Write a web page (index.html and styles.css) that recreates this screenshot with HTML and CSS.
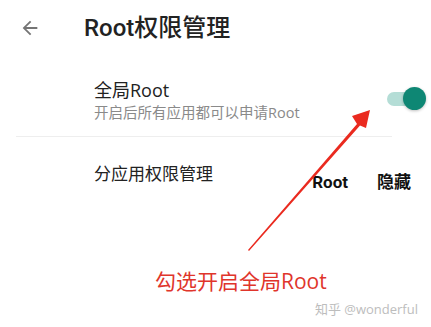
FILE: index.html
```
<!DOCTYPE html>
<html lang="zh">
<head>
<meta charset="utf-8">
<link rel="stylesheet" href="styles.css">
</head>
<body>
<div class="page">
  <header class="bar">
    <svg class="back" width="22" height="22" viewBox="0 0 24 24"><path d="M20 11H7.83l5.59-5.59L12 4l-8 8 8 8 1.41-1.41L7.83 13H20v-2z" fill="#757575"/></svg>
    <h1 class="title">Root权限管理</h1>
  </header>
  <section class="item item-global">
    <div class="texts">
      <div class="item-title">全局Root</div>
      <div class="item-sub">开启后所有应用都可以申请Root</div>
    </div>
    <div class="switch"><span class="track"></span><span class="thumb"></span></div>
  </section>
  <div class="divider"></div>
  <section class="item item-apps">
    <div class="item-title">分应用权限管理</div>
    <div class="tabs"><span class="tab">Root</span><span class="tab">隐藏</span></div>
  </section>
  <p class="caption">勾选开启全局Root</p>
  <p class="mark">知乎 @wonderful</p>
  <svg class="arrow" width="431" height="327" viewBox="0 0 431 327">
    <polygon points="248,250 357,124 352,116 370,110 366,128 360,125.5 249,251" fill="#ea2a1f"/>
  </svg>
</div>
</body>
</html>
```
FILE: styles.css
```
html, body { margin: 0; padding: 0; background: #fff; }
body { font-family: "Open Sans", "Noto Sans CJK SC", sans-serif; }
.page { position: relative; width: 431px; height: 327px; overflow: hidden; }
.bar { display: flex; align-items: center; height: 56px; padding-left: 19px; }
.back { display: block; }
.title { margin: 0 0 0 43px; font-family: Roboto, "Noto Sans CJK SC", sans-serif; font-size: 24px; font-weight: 500; color: #222; line-height: 56px; }
.item { display: flex; padding-left: 94px; }
.item-global { padding-top: 23px; padding-bottom: 14px; align-items: flex-start; }
.texts { flex: 1; }
.item-title { font-size: 18px; line-height: 22px; color: #222; }
.item-sub { margin-top: 3px; font-size: 14.5px; line-height: 18px; color: #8a8a8a; }
.switch { position: relative; width: 40px; height: 24px; margin-top: 8px; margin-right: 4px; }
.track { position: absolute; left: 0; top: 5px; width: 30px; height: 14px; border-radius: 7px; background: #b4ddd6; }
.thumb { position: absolute; left: 16px; top: 0; width: 23px; height: 23px; border-radius: 50%; background: #0e8774; box-shadow: 0 1px 3px rgba(0,0,0,0.25); }
.divider { height: 1px; background: #eeeeee; margin: 0 39px 0 16px; }
.item-apps { padding-top: 26px; align-items: flex-start; }
.item-apps .item-title { font-size: 17px; }
.tabs { display: flex; gap: 29px; margin-left: auto; margin-right: 20px; margin-top: 9px; }
.tab { font-family: Roboto, "Noto Sans CJK SC", sans-serif; font-size: 17px; font-weight: 700; color: #111; line-height: 20px; }
.caption { margin: 77px 0 0 0; padding-left: 155px; font-size: 21px; line-height: 24px; color: #e0352b; }
.mark { margin: 7px 13px 0 0; text-align: right; font-size: 13px; line-height: 18px; color: #bdbdbd; }
.arrow { position: absolute; left: 0; top: 0; }
```
